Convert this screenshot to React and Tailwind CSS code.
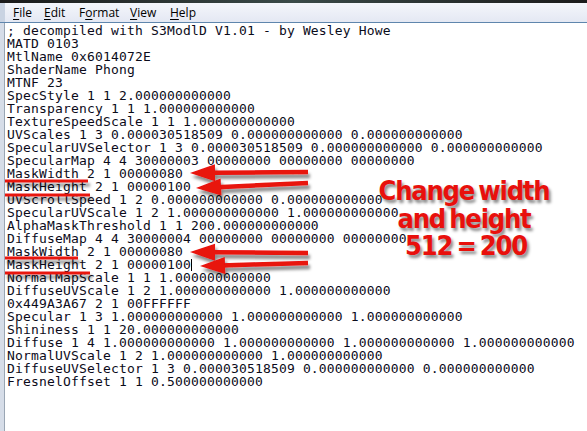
import React from 'react';

const lines = [
  '; decompiled with S3ModlD V1.01 - by Wesley Howe',
  'MATD 0103',
  'MtlName 0x6014072E',
  'ShaderName Phong',
  'MTNF 23',
  'SpecStyle 1 1 2.000000000000',
  'Transparency 1 1 1.000000000000',
  'TextureSpeedScale 1 1 1.000000000000',
  'UVScales 1 3 0.000030518509 0.000000000000 0.000000000000',
  'SpecularUVSelector 1 3 0.000030518509 0.000000000000 0.000000000000',
  'SpecularMap 4 4 30000003 00000000 00000000 00000000',
  'MaskWidth 2 1 00000080',
  'MaskHeight 2 1 00000100',
  'UVScrollSpeed 1 2 0.000000000000 0.000000000000',
  'SpecularUVScale 1 2 1.000000000000 1.000000000000',
  'AlphaMaskThreshold 1 1 200.000000000000',
  'DiffuseMap 4 4 30000004 00000000 00000000 00000000',
  'MaskWidth 2 1 00000080',
  'MaskHeight 2 1 00000100',
  'NormalMapScale 1 1 1.000000000000',
  'DiffuseUVScale 1 2 1.000000000000 1.000000000000',
  '0x449A3A67 2 1 00FFFFFF',
  'Specular 1 3 1.000000000000 1.000000000000 1.000000000000',
  'Shininess 1 1 20.000000000000',
  'Diffuse 1 4 1.000000000000 1.000000000000 1.000000000000 1.000000000000',
  'NormalUVScale 1 2 1.000000000000 1.000000000000',
  'DiffuseUVSelector 1 3 0.000030518509 0.000000000000 0.000000000000',
  'FresnelOffset 1 1 0.500000000000',
];

const menu = [
  { key: 'F', rest: 'ile', w: 'w-[31px]' },
  { key: 'E', rest: 'dit', w: 'w-[35px]' },
  { pre: 'F', key: 'o', rest: 'rmat', w: 'w-[51px]' },
  { key: 'V', rest: 'iew', w: 'w-[40px]' },
  { key: 'H', rest: 'elp', w: 'w-[40px]' },
];

// arrow: tip point, right end of the shaft
const arrows = [
  { tx: 190, ty: 173, ey: 172 },
  { tx: 196, ty: 188, ey: 183 },
  { tx: 190, ty: 252, ey: 253 },
  { tx: 200, ty: 266, ey: 263 },
];

const underlines = [
  { y: 181, x2: 88 },
  { y: 195, x2: 90 },
  { y: 258, x2: 78 },
  { y: 273, x2: 90 },
];

function Arrow({ tx, ty, ey }) {
  const hx = tx + 25;
  const ang = Math.atan2(ey - ty, 310 - tx);
  const dy = Math.cos(ang) * 8.5;
  const dx = Math.sin(ang) * 8.5;
  return (
    <g>
      <line x1={hx - 4} y1={ty + (ey - ty) * 0.17} x2={308} y2={ey} stroke="#e8120f" strokeWidth="4.5" />
      <polygon points={`${tx},${ty} ${hx + dx},${ty + (ey - ty) * 0.2 - dy} ${hx - dx},${ty + (ey - ty) * 0.2 + dy}`} fill="#e8120f" />
    </g>
  );
}

export default function App() {
  return (
    <div className="relative w-[587px] h-[431px] overflow-hidden bg-white">
      {/* window frame */}
      <div className="h-[3px] bg-gradient-to-r from-[#1b1b1b] via-[#3a4a48] to-[#1b1b1b]" />

      {/* menu bar */}
      <div className="flex h-[19px] items-center border-l-[5px] border-[#c9d3e2] bg-gradient-to-b from-[#f4f6fb] to-[#e4e8f3] pl-[8px] text-[12px] text-black" style={{ fontFamily: '"Open Sans", "Liberation Sans", sans-serif' }}>
        {menu.map((m) => (
          <span key={m.rest} className={`${m.w} leading-none`}>
            {m.pre}
            <span className="underline underline-offset-2">{m.key}</span>
            {m.rest}
          </span>
        ))}
      </div>
      <div className="h-px bg-[#5f86ad]" />

      {/* text area */}
      <div className="flex h-[408px]">
        <div className="w-[5px] border-r border-[#9aa6b4] bg-[#d6dde8]" />
        <pre
          className="m-0 pl-[2px] pt-[1px] text-[13px] leading-[13px] tracking-[0.17px] text-[#0b0b1a]"
          style={{ fontFamily: '"DejaVu Sans Mono", "Liberation Mono", monospace' }}
        >
          {lines.map((l, i) => (
            <div key={i} className="h-[13px] whitespace-pre">
              {l}
              {i === 18 && <span className="inline-block h-[12px] w-px bg-black align-[-2px]" />}
            </div>
          ))}
        </pre>
      </div>

      {/* annotations */}
      <svg className="pointer-events-none absolute inset-0" width="587" height="431">
        <defs>
          <filter id="sh" x="-20%" y="-100%" width="140%" height="300%">
            <feDropShadow dx="2" dy="4" stdDeviation="1.6" floodColor="#000" floodOpacity="0.45" />
          </filter>
        </defs>
        <g filter="url(#sh)">
          {underlines.map((u, i) => (
            <line key={i} x1={5} y1={u.y} x2={u.x2} y2={u.y} stroke="#e8120f" strokeWidth="3" />
          ))}
          {arrows.map((a, i) => (
            <Arrow key={i} {...a} />
          ))}
        </g>
      </svg>

      <div
        className="absolute left-[364px] top-[177px] w-[200px] text-center text-[27px] font-bold leading-[27.5px] tracking-[-1.2px] [word-spacing:-3px] text-[#e8100c]"
        style={{ fontFamily: '"DejaVu Sans Condensed", "Liberation Sans Narrow", "Liberation Sans", sans-serif', textShadow: '2px 3px 3px rgba(0,0,0,0.45)' }}
      >
        <div>Change width</div>
        <div>and height</div>
        <div className="pl-[4px]">512 = 200</div>
      </div>
    </div>
  );
}
